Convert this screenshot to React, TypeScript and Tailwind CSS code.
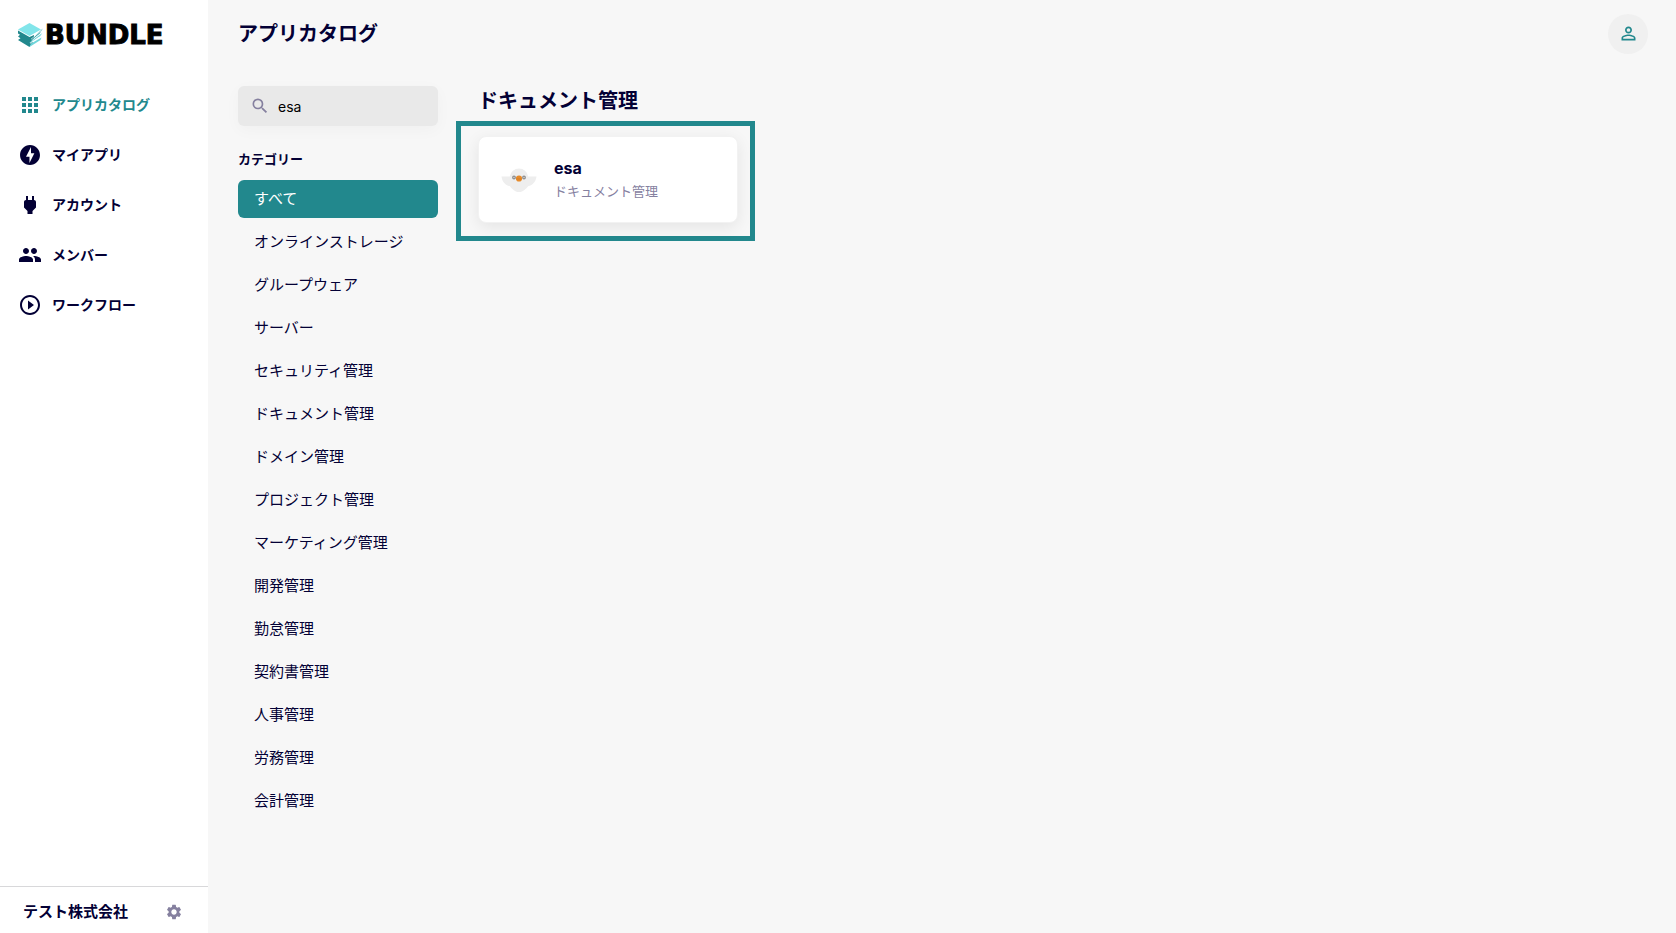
import React, { useState } from 'react';
import {
  MdApps,
  MdOfflineBolt,
  MdPeople,
  MdPersonOutline,
  MdPlayCircleOutline,
  MdPower,
  MdSearch,
  MdSettings,
} from 'react-icons/md';
import type { IconType } from 'react-icons';

interface NavItem {
  label: string;
  icon: IconType;
}

interface AppEntry {
  name: string;
  category: string;
}

const NAV_ITEMS: NavItem[] = [
  { label: 'アプリカタログ', icon: MdApps },
  { label: 'マイアプリ', icon: MdOfflineBolt },
  { label: 'アカウント', icon: MdPower },
  { label: 'メンバー', icon: MdPeople },
  { label: 'ワークフロー', icon: MdPlayCircleOutline },
];

const CATEGORIES = [
  'すべて',
  'オンラインストレージ',
  'グループウェア',
  'サーバー',
  'セキュリティ管理',
  'ドキュメント管理',
  'ドメイン管理',
  'プロジェクト管理',
  'マーケティング管理',
  '開発管理',
  '勤怠管理',
  '契約書管理',
  '人事管理',
  '労務管理',
  '会計管理',
];

const Logo: React.FC = () => (
  <a href="#" className="flex items-center gap-0.5 px-[17px] text-black">
    <svg width="26" height="26" viewBox="0 0 26 26" aria-hidden="true">
      {/* lower sheets, left faces */}
      <path d="M1 8.500 12.500 15 17 13 17 16 14.500 18.500 16 20 12.500 25 1 18 3.500 16.200 1 14.600 3 12.800 1 11.500z" fill="#22888d" />
      {/* lower sheets, right faces */}
      <path d="M13.500 18.500 25.800 6.500 22.500 11.800 14 18.500z" fill="#2f9ba0" />
      <path d="M12.500 20.500 25.300 11 23 14.500 13 21z" fill="#6fd5da" />
      <path d="M12.500 25 14 21.600 24.500 15.500 23.500 18z" fill="#6fd5da" />
      <path d="M14 17.200 24.500 8.700" stroke="#fff" strokeWidth="0.600" />
      <path d="M13 21.300 23.500 14.300" stroke="#fff" strokeWidth="0.800" />
      {/* top sheet */}
      <path d="M1 7.500 12.500 1 24 7.500 12.500 14z" fill="#82e5ea" />
    </svg>
    <span className="pt-px font-['DejaVu_Sans',sans-serif] text-[26px] leading-8 font-bold [-webkit-text-stroke:1px_black]">
      BUNDLE
    </span>
  </a>
);

const BirdIcon: React.FC = () => (
  <svg width="36" height="24" viewBox="0 0 36 24" className="shrink-0" aria-hidden="true">
    <path
      d="M0.500 8.500h8.300a9.300 9.300 0 0 1 18.400 0h8.300c-.6 5-3.500 8.500-8.400 9.700C25 20.500 22.500 24 18 24s-7-3.500-9.100-5.800C4 17 1.100 13.500.5 8.500z"
      fill="#eeeeee"
    />
    <circle cx="13" cy="9.500" r="1.300" fill="#ddd" stroke="#8b8b8b" strokeWidth="1.200" />
    <circle cx="23" cy="9.500" r="1.300" fill="#ddd" stroke="#8b8b8b" strokeWidth="1.200" />
    <circle cx="18" cy="10.500" r="3.100" fill="#e78b2b" />
    <path d="M15.500 11h5" stroke="#cf7a22" strokeWidth="0.800" />
  </svg>
);

const Sidebar: React.FC = () => (
  <aside className="flex w-52 shrink-0 flex-col bg-white">
    <div className="pt-[18px]">
      <Logo />
    </div>
    <nav className="mt-[29px] flex flex-1 flex-col">
      {NAV_ITEMS.map(({ label, icon: Icon }, index) => (
        <a
          key={label}
          href="#"
          className={`flex h-[50px] items-center gap-2.5 px-[18px] text-sm font-bold ${index === 0 ? 'text-[#22888d]' : ''}`}
        >
          <Icon size={24} />
          {label}
        </a>
      ))}
    </nav>
    <div className="flex h-[47px] items-center justify-between border-t border-[#d8d8da] pt-1 pr-[25px] pl-[23px]">
      <span className="text-[15px] font-bold">テスト株式会社</span>
      <button type="button" aria-label="設定" className="text-[#85809f]">
        <MdSettings size={18} />
      </button>
    </div>
  </aside>
);

const AppCard: React.FC<{ app: AppEntry }> = ({ app }) => (
  <a
    href="#"
    className="flex h-[87px] w-[260px] items-center gap-[17px] rounded-lg border border-[#f2f2f2] bg-white px-[22px] shadow-[0_4px_16px_rgba(0,0,0,0.08)]"
  >
    <BirdIcon />
    <div className="flex flex-col pb-px">
      <span className="text-base leading-6 font-bold">{app.name}</span>
      <span className="text-[13px] leading-[22px] text-[#85809f]">{app.category}</span>
    </div>
  </a>
);

const App: React.FC = () => {
  const [query, setQuery] = useState('esa');
  const [selected, setSelected] = useState('すべて');

  return (
    <div className="flex min-h-screen bg-[#f7f7f7] font-[Inter,'Noto_Sans_CJK_JP',sans-serif] text-[#030035]">
      <Sidebar />
      <main className="flex min-w-0 flex-1 flex-col">
        <header className="flex h-[67px] items-center justify-between pr-7 pl-[30px]">
          <h1 className="text-xl font-bold">アプリカタログ</h1>
          <button
            type="button"
            aria-label="プロフィール"
            className="flex size-10 items-center justify-center rounded-full bg-[#f0f0f0] text-[#22888d]"
          >
            <MdPersonOutline size={21} />
          </button>
        </header>

        <div className="flex gap-[18px] pt-[19px] pl-[30px]">
          <div className="w-[200px] shrink-0">
            <label className="flex h-10 items-center gap-2 rounded-md bg-[#e9e9e9] px-3 shadow-[0_4px_16px_rgba(0,0,0,0.03)]">
              <MdSearch size={20} className="shrink-0 text-[#85809f]" />
              <input
                type="text"
                aria-label="アプリを検索"
                value={query}
                onChange={e => setQuery(e.target.value)}
                className="w-full min-w-0 bg-transparent pt-0.5 text-sm text-black outline-none"
              />
            </label>

            <h2 className="mt-[23px] text-[13px] leading-5 font-bold">カテゴリー</h2>
            <ul className="mt-[11px] flex flex-col gap-[5px]">
              {CATEGORIES.map(category => (
                <li key={category}>
                  <button
                    type="button"
                    onClick={() => setSelected(category)}
                    className={`flex h-[38px] w-full items-center rounded-md px-4 text-[15px] ${category === selected ? 'bg-[#22888d] text-white' : ''}`}
                  >
                    {category}
                  </button>
                </li>
              ))}
            </ul>
          </div>

          <section className="min-w-0 flex-1">
            <h2 className="pl-[22px] text-xl leading-[30px] font-bold">ドキュメント管理</h2>
            <div className="mt-[5px] w-fit border-5 border-[#22888d] pt-[10px] pr-[12px] pb-[13px] pl-[17px]">
              <AppCard app={{ name: 'esa', category: 'ドキュメント管理' }} />
            </div>
          </section>
        </div>
      </main>
    </div>
  );
};

export default App;
